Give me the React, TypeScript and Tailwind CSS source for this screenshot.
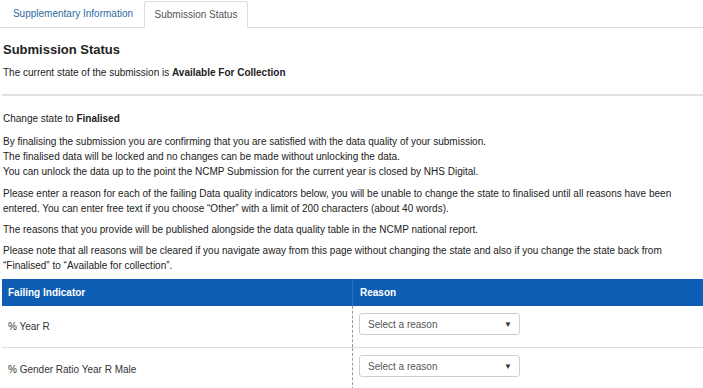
const rows = ["% Year R", "% Gender Ratio Year R Male"];

function ReasonSelect() {
  return (
    <div className="w-[161px] h-[22px] border border-[#cfcfcf] rounded-[3px] bg-white flex items-center justify-between pl-[8px] pr-[7px] text-[#555]">
      <span>Select a reason</span>
      <span className="text-[8px] text-[#333]">▼</span>
    </div>
  );
}

export default function App() {
  return (
    <div className="w-[703px] h-[388px] overflow-hidden bg-white text-[#222] text-[10px] leading-[15px] font-['Liberation_Sans',Arial,sans-serif]">
      {/* tabs */}
      <div className="h-[28px] flex items-end border-b border-[#dcdcdc] pl-[2px]">
        <div className="h-[27px] w-[142px] flex items-center justify-center text-[#2d6aa3]">
          Supplementary Information
        </div>
        <div className="h-[27px] w-[104px] flex items-center justify-center border border-b-0 border-[#dcdcdc] rounded-t-[3px] bg-white text-[#555] -mb-px pb-px">
          Submission Status
        </div>
      </div>

      <div className="pl-[3px]">
        <h2 className="text-[13px] leading-[16px] font-bold mt-[14px]">Submission Status</h2>
        <p className="mt-[7px]">
          The current state of the submission is <span className="font-bold">Available For Collection</span>
        </p>
      </div>

      <div className="ml-[2px] mt-[14px] border-t-[2px] border-[#e2e2e2]" />

      <div className="pl-[3px] pr-[8px]">
        <p className="mt-[15px]">
          Change state to <span className="font-bold">Finalised</span>
        </p>
        <p className="mt-[8px]">
          By finalising the submission you are confirming that you are satisfied with the data quality of your submission.
          <br />
          The finalised data will be locked and no changes can be made without unlocking the data.
          <br />
          You can unlock the data up to the point the NCMP Submission for the current year is closed by NHS Digital.
        </p>
        <p className="mt-[7px]">
          Please enter a reason for each of the failing Data quality indicators below, you will be unable to change the state to finalised until all reasons have been entered. You can enter free text if you choose “Other” with a limit of 200 characters (about 40 words).
        </p>
        <p className="mt-[6px]">
          The reasons that you provide will be published alongside the data quality table in the NCMP national report.
        </p>
        <p className="mt-[6px]">
          Please note that all reasons will be cleared if you navigate away from this page without changing the state and also if you change the state back from “Finalised” to “Available for collection”.
        </p>
      </div>

      <div className="ml-[2px] mt-[6px]">
        <div className="flex h-[27px] bg-[#0c5db3] text-white font-bold">
          <div className="w-[350px] flex items-center pl-[6px]">Failing Indicator</div>
          <div className="flex-1 flex items-center pl-[7px] border-l border-[#2a6fbd]">Reason</div>
        </div>
        {rows.map((r, i) => (
          <div key={r} className={`flex h-[42px] ${i === 0 ? "border-b border-[#dedede]" : ""}`}>
            <div className="w-[350px] flex items-center pl-[6px] text-[#333]">{r}</div>
            <div className="flex-1 border-l border-dashed border-[#9a9a9a] pl-[6px] pt-[7px]">
              <ReasonSelect />
            </div>
          </div>
        ))}
      </div>
    </div>
  );
}
